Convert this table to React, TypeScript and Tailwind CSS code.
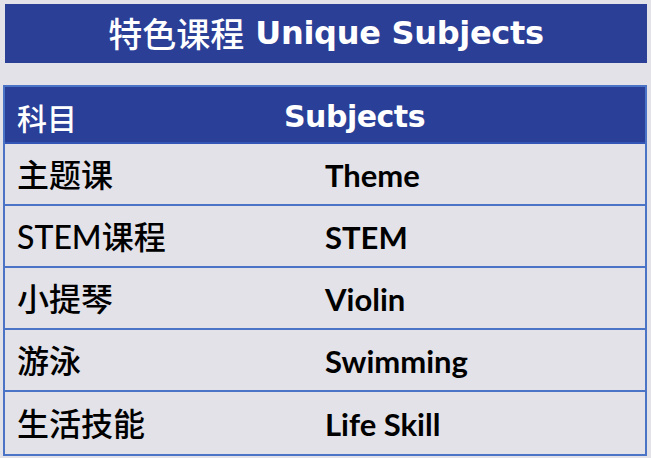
const rows = [
  { zh: "主题课", en: "Theme" },
  { zh: "STEM课程", en: "STEM" },
  { zh: "小提琴", en: "Violin" },
  { zh: "游泳", en: "Swimming" },
  { zh: "生活技能", en: "Life Skill" },
];

const cjk = "font-['Noto_Sans_CJK_SC',sans-serif]";
const headFont = "font-['DejaVu_Sans','Noto_Sans_CJK_SC',sans-serif]";
const bodyEn = "font-['Lato','Noto_Sans_CJK_SC',sans-serif]";

export default function App() {
  return (
    <div className="h-[458px] w-[651px] overflow-hidden bg-[#e3e2e8] pt-[4px]">
      {/* Title bar */}
      <div className="ml-[5px] flex h-[59px] w-[642px] items-center justify-center bg-[#2b3f97] pb-[2px] text-white">
        <span className={`${cjk} text-[34px] font-medium leading-none`}>特色课程</span>
        <span className={`${headFont} ml-[11px] text-[32px] font-bold leading-none tracking-[-0.3px]`}>
          Unique Subjects
        </span>
      </div>

      {/* Table */}
      <div className="ml-[3px] mt-[22px] w-[644px] border-2 border-[#4b74c6]">
        <div className="flex h-[57px] items-center border-b-2 border-[#3355b5] bg-[#2a3f97] pt-[4px] text-white">
          <span className={`${cjk} w-[222px] pl-[12px] text-[30px] font-medium leading-none`}>科目</span>
          <span className={`${headFont} ml-[57px] text-[30px] font-bold leading-none tracking-[-0.5px]`}>
            Subjects
          </span>
        </div>
        {rows.map((r, i) => (
          <div
            key={r.en}
            className={`flex h-[62px] items-center bg-[#e3e2e8] pt-[2px] text-black ${
              i < rows.length - 1 ? "border-b-2 border-[#4b74c6]" : ""
            }`}
          >
            <span className={`${bodyEn} w-[320px] pl-[12px] text-[32px] font-medium leading-none`}>
              {r.zh}
            </span>
            <span className={`${bodyEn} text-[31px] font-bold leading-none`}>{r.en}</span>
          </div>
        ))}
      </div>
    </div>
  );
}
